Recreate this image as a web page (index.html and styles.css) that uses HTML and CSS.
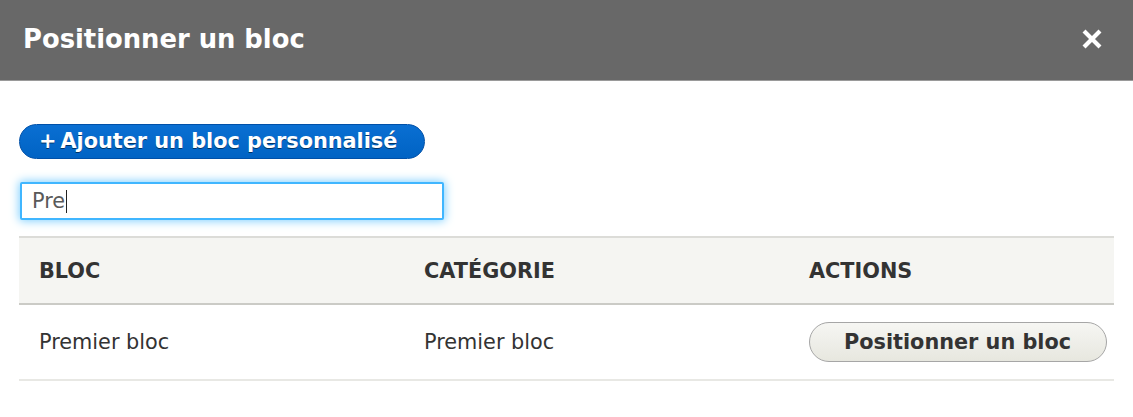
FILE: index.html
```html
<!DOCTYPE html>
<html lang="fr">
<head>
<meta charset="utf-8">
<title>Positionner un bloc</title>
<link rel="stylesheet" href="styles.css">
</head>
<body>
<div class="dialog">
  <div class="titlebar">
    <span class="title">Positionner un bloc</span>
    <button class="close" aria-label="Fermer">
      <svg width="20" height="20" viewBox="0 0 20 20"><path d="M3.5 3.5 L16.5 16.5 M16.5 3.5 L3.5 16.5" stroke="#fff" stroke-width="4.2" stroke-linecap="square" fill="none"/></svg>
    </button>
  </div>
  <div class="content">
    <div class="actions-top">
      <a class="btn-primary" href="#"><span class="plus">+</span>Ajouter un bloc personnalisé</a>
    </div>
    <div class="filter">
      <div class="input"><span class="typed">Pre</span><span class="caret"></span></div>
    </div>
    <table class="blocks">
      <thead>
        <tr><th class="c1">Bloc</th><th class="c2">Catégorie</th><th class="c3">Actions</th></tr>
      </thead>
      <tbody>
        <tr>
          <td>Premier bloc</td>
          <td>Premier bloc</td>
          <td><a class="btn" href="#">Positionner un bloc</a></td>
        </tr>
      </tbody>
    </table>
  </div>
</div>
</body>
</html>
```
FILE: styles.css
```css
* { box-sizing: border-box; }
html, body { margin: 0; padding: 0; }
body {
  font-family: "DejaVu Sans", sans-serif;
  color: #333;
  background: #fff;
  width: 1133px;
  height: 417px;
  overflow: hidden;
}
.titlebar {
  height: 81px;
  background: #686868;
  border-bottom: 1px solid #9a9a9a;
  display: flex;
  align-items: center;
  justify-content: space-between;
  padding: 0 31px 0 23px;
}
.title {
  color: #fff;
  font-weight: bold;
  font-size: 25.8px;
  line-height: 30px;
  margin-top: -2px;
}
.close {
  background: none;
  border: 0;
  padding: 0;
  width: 20px;
  height: 20px;
  display: flex;
  margin-top: -2px;
}
.content {
  padding: 43px 19px 0 19px;
}
.actions-top { display: flex; }
.btn-primary {
  display: inline-block;
  height: 35px;
  line-height: 33px;
  padding: 0 27px 0 19px;
  border-radius: 20em;
  border: 1px solid #0050a8;
  background: linear-gradient(to bottom, #0a6fd2, #0063c4);
  color: #fff;
  font-weight: bold;
  font-size: 20.8px;
  text-decoration: none;
  text-shadow: 0 1px rgba(0,0,0,0.5);
  white-space: nowrap;
}
.plus { margin-right: 4px; }
.filter {
  margin-top: 23px;
  display: flex;
}
.input {
  margin-left: 1px;
  width: 424px;
  height: 38px;
  border: 2px solid #40b6ff;
  border-radius: 2px;
  box-shadow: 0 0 10px 1px #7fd0ff;
  background: #fff;
  display: flex;
  align-items: center;
  padding-left: 10px;
  font-size: 20.8px;
  color: #595959;
}
.caret {
  display: inline-block;
  width: 1px;
  height: 23px;
  background: #222;
  margin-left: 1px;
}
.blocks {
  margin-top: 16px;
  width: 1095px;
  border-collapse: collapse;
}
.blocks th {
  background: #f5f5f2;
  border-top: 2px solid #dcdcd8;
  border-bottom: 2px solid #cbcbc6;
  height: 67px;
  text-align: left;
  text-transform: uppercase;
  font-weight: bold;
  font-size: 20.8px;
  padding: 0 0 0 20px;
  color: #333;
}
.c1 { width: 385px; }
.c2 { width: 385px; }
.blocks td {
  height: 76px;
  padding: 0 0 0 20px;
  border-bottom: 2px solid #e8e8e4;
  font-size: 20.8px;
  color: #333;
}
.btn {
  display: inline-block;
  height: 40px;
  line-height: 38px;
  padding: 0 35px 0 34px;
  border-radius: 20em;
  border: 1px solid #a6a6a6;
  background: linear-gradient(to bottom, #f6f6f3, #e7e7df);
  color: #333;
  font-weight: bold;
  font-size: 20.8px;
  text-decoration: none;
  white-space: nowrap;
}
```
